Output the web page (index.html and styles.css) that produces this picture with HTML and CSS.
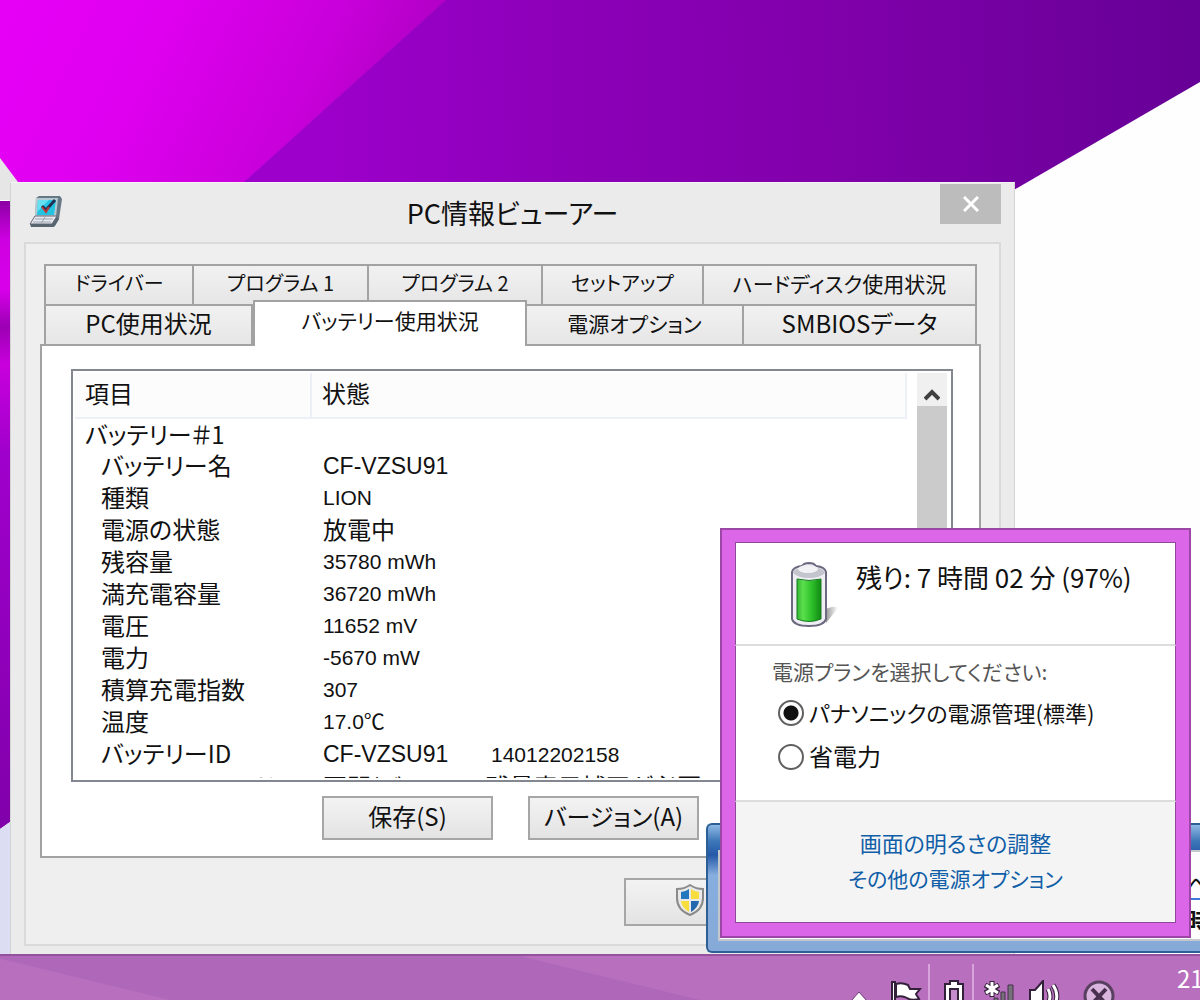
FILE: index.html
```html
<!DOCTYPE html>
<html lang="ja">
<head>
<meta charset="utf-8">
<title>PC情報ビューアー</title>
<link rel="stylesheet" href="styles.css">
</head>
<body>
<svg class="wallpaper" viewBox="0 0 1200 1000" preserveAspectRatio="xMinYMin slice" aria-hidden="true">
  <defs>
    <linearGradient id="magenta" x1="0" y1="0" x2="1" y2="0.2">
      <stop offset="0" stop-color="#e600f6"/><stop offset="0.35" stop-color="#e000f0"/><stop offset="0.75" stop-color="#c800da"/><stop offset="1" stop-color="#ae00c2"/>
    </linearGradient>
    <linearGradient id="purple" gradientUnits="userSpaceOnUse" x1="300" y1="80" x2="1200" y2="60">
      <stop offset="0" stop-color="#9e00cc"/><stop offset="0.3" stop-color="#8c00b8"/><stop offset="0.6" stop-color="#8000aa"/><stop offset="1" stop-color="#660096"/>
    </linearGradient>
    <linearGradient id="edge" x1="0" y1="0" x2="0" y2="1">
      <stop offset="0" stop-color="#8c00a4"/><stop offset="0.06" stop-color="#cc00e0"/><stop offset="0.14" stop-color="#d800ea"/><stop offset="0.2" stop-color="#9c00b4"/><stop offset="0.26" stop-color="#c800dc"/><stop offset="0.4" stop-color="#a000cc"/><stop offset="1" stop-color="#8000aa"/>
    </linearGradient>
  </defs>
  <rect width="1200" height="1000" fill="#fefefe"/>
  <path d="M0 0H447L236 190H20Q6 182 0 162Z" fill="url(#magenta)"/>
  <path d="M446 0H1200V82L1012 191H234Z" fill="url(#purple)"/>
  <path d="M0 158L18 182V200H0Z" fill="#e6e6e6"/>
  <path d="M0 201H10V822L0 829Z" fill="url(#edge)"/>
  <path d="M0 829L10 822V960H0Z" fill="#dcdcf2"/>
</svg>

<main class="window">
  <header class="titlebar">
    <svg class="app-icon" viewBox="0 0 34 34" aria-hidden="true">
      <path d="M7 3L10 1H31L33 4L30 24L26 31H6Z" fill="#657883"/>
      <path d="M7 3H29L27 22H6Z" fill="#b4cad2"/>
      <path d="M9 5H27L25 20H8Z" fill="#22c4e2"/>
      <path d="M9 5H20L8 17Z" fill="#66e0f0"/>
      <path d="M6 21H28L23 29H1Z" fill="#e8eaf0" stroke="#667" />
      <path d="M1 29H23L28 22L30 24L25 32H2Z" fill="#576670"/>
      <path d="M6 24H24M4 27H22M16 22L12 29" stroke="#9aa3b0" fill="none"/>
      <path d="M13 11L17 15L26 5" fill="none" stroke="#243052" stroke-width="3"/>
      <path d="M13 12L17 17L20 12" fill="none" stroke="#b83c3c" stroke-width="2"/>
    </svg>
    <h1 class="title">PC情報ビューアー</h1>
    <button class="close" type="button" aria-label="閉じる">
      <svg viewBox="0 0 16 16" width="16" height="16"><path d="M1 1L15 15M15 1L1 15" stroke="#fff" stroke-width="3" fill="none"/></svg>
    </button>
  </header>
  <div class="client">
    <div class="tabs" role="tablist">
      <div class="tab-row tab-row-back">
        <button class="tab kana" role="tab" type="button">ドライバー</button>
        <button class="tab kana" role="tab" type="button">プログラム 1</button>
        <button class="tab kana" role="tab" type="button">プログラム 2</button>
        <button class="tab kana" role="tab" type="button">セットアップ</button>
        <button class="tab mixed" role="tab" type="button">ハードディスク使用状況</button>
      </div>
      <div class="tab-row tab-row-front">
        <button class="tab" role="tab" type="button">PC使用状況</button>
        <button class="tab mixed selected" role="tab" type="button" aria-selected="true">バッテリー使用状況</button>
        <button class="tab mixed" role="tab" type="button">電源オプション</button>
        <button class="tab" role="tab" type="button">SMBIOSデータ</button>
      </div>
    </div>
    <section class="panel" role="tabpanel">
      <div class="list">
        <div class="list-view">
          <table class="table">
            <colgroup><col class="col-item"><col class="col-state"></colgroup>
            <thead><tr><th>項目</th><th>状態</th></tr></thead>
            <tbody>
              <tr><td class="group">バッテリー＃1</td><td></td></tr>
              <tr><td>バッテリー名</td><td class="num code">CF-VZSU91</td></tr>
              <tr><td>種類</td><td class="num">LION</td></tr>
              <tr><td>電源の状態</td><td>放電中</td></tr>
              <tr><td>残容量</td><td class="num">35780 mWh</td></tr>
              <tr><td>満充電容量</td><td class="num">36720 mWh</td></tr>
              <tr><td>電圧</td><td class="num">11652 mV</td></tr>
              <tr><td>電力</td><td class="num">-5670 mW</td></tr>
              <tr><td>積算充電指数</td><td class="num">307</td></tr>
              <tr><td>温度</td><td class="num">17.0℃</td></tr>
              <tr><td>バッテリーID</td><td class="num"><span class="model code">CF-VZSU91</span>14012202158</td></tr>
              <tr><td>エコノミーモード</td><td>再開(バッテリー残量表示補正が必要です)</td></tr>
            </tbody>
          </table>
        </div>
        <div class="scrollbar">
          <button class="scroll-up" type="button" aria-label="上へスクロール">
            <svg viewBox="0 0 16 12" width="16" height="12"><path d="M1 10L8 3L15 10" fill="none" stroke="#404040" stroke-width="4"/></svg>
          </button>
          <div class="thumb"></div>
        </div>
      </div>
      <div class="actions">
        <button class="button" type="button">保存(S)</button>
        <button class="button" type="button">バージョン(A)</button>
      </div>
    </section>
    <div class="footer">
      <button class="button shield-button" type="button" aria-label="管理者として実行">
        <svg viewBox="0 0 28 32" width="28" height="32">
          <path d="M14 1Q20 5 27 5V14Q27 26 14 31Q1 26 1 14V5Q8 5 14 1Z" fill="#e9e9e9" stroke="#8a8a8a" stroke-width="2"/>
          <path d="M13 5V15H5V8Q9 8 13 5Z" fill="#2377bd"/><path d="M15 5Q19 8 23 8V15H15Z" fill="#f7de3c"/>
          <path d="M5 17H13V28Q6 24 5 17Z" fill="#f7de3c"/><path d="M15 17H23Q22 24 15 28Z" fill="#2367ae"/>
        </svg>
      </button>
    </div>
  </div>
</main>

<aside class="gadget">
  <div class="gadget-body">
    <p class="gadget-line gadget-link">へ</p>
    <p class="gadget-line gadget-time">時</p>
  </div>
</aside>

<footer class="taskbar">
  <svg class="glass" viewBox="0 0 1200 46" preserveAspectRatio="none" aria-hidden="true"><path d="M0 3L170 46H700L520 0H0Z" fill="#a862b6" opacity="0.6"/></svg>
  <div class="tray">
    <svg class="caret" viewBox="0 0 18 12" width="18" height="12"><path d="M1 11L9 2L17 11Z" fill="#fff" stroke="#6d3a78"/></svg>
    <svg class="flag" viewBox="0 0 32 26" width="32" height="26"><path d="M2 26V2H5V26Z" fill="#fff" stroke="#33203a" stroke-width="2"/><path d="M6 4Q12 2 18 5L20 9H30L26 14L29 19Q22 21 17 18Q12 15 6 17Z" fill="#fff" stroke="#33203a" stroke-width="2"/></svg>
    <span class="highlight"><svg viewBox="0 0 22 26" width="22" height="26"><path d="M7 1H15V4H20V26H2V4H7Z" fill="#fff" stroke="#33203a" stroke-width="2"/><path d="M7 9H15V26H7Z" fill="#c58bcc" stroke="#33203a" stroke-width="2"/></svg></span>
    <svg class="signal" viewBox="0 0 32 26" width="32" height="26"><path d="M9 1V17M2 5L16 13M16 5L2 13" stroke="#33203a" stroke-width="5"/><path d="M9 2V16M3 5L15 13M15 5L3 13" stroke="#fff" stroke-width="3"/><path d="M11 26V18H15V26M18 26V12H22V26M25 26V5H30V26" fill="#77717a" stroke="#44304a"/></svg>
    <svg class="volume" viewBox="0 0 32 26" width="32" height="26"><path d="M1 10H6L14 1V26H1Z" fill="#fff" stroke="#33203a" stroke-width="2"/><path d="M19 9Q23 16 19 24M24 5Q31 15 25 26" fill="none" stroke="#33203a" stroke-width="5"/><path d="M19 9Q23 16 19 24M24 5Q31 15 25 26" fill="none" stroke="#fff" stroke-width="3"/></svg>
    <svg class="offline" viewBox="0 0 32 26" width="32" height="26"><circle cx="16" cy="16" r="14" fill="#d9b4de" stroke="#5a4060" stroke-width="3"/><path d="M9 9L23 24M23 9L9 24" stroke="#4a3050" stroke-width="4"/></svg>
    <time class="clock">21:05</time>
  </div>
</footer>

<section class="popup" aria-label="電源">
  <div class="popup-status">
    <svg class="battery" viewBox="0 0 50 66" width="50" height="66" aria-hidden="true">
      <defs>
        <linearGradient id="cell" x1="0" x2="1"><stop offset="0" stop-color="#36b436"/><stop offset="0.25" stop-color="#5be04c"/><stop offset="0.6" stop-color="#2fc22b"/><stop offset="1" stop-color="#128a14"/></linearGradient>
        <linearGradient id="cast" x1="0" x2="1"><stop offset="0" stop-color="#999"/><stop offset="1" stop-color="#fff"/></linearGradient>
      </defs>
      <path d="M36 61L48 46Q45 43 36 47Z" fill="url(#cast)"/>
      <path d="M2 10Q3 5 12 4Q14 1 19 1Q24 1 26 4Q35 5 36 10V57Q34 64 19 64Q4 64 2 57Z" fill="#eeeef4" stroke="#6c6a80" stroke-width="2"/>
      <path d="M3 11Q5 6 12 6Q14 2 19 2Q24 2 26 6Q33 6 35 11Q30 16 19 16Q8 16 3 11Z" fill="#c4c4ce"/>
      <ellipse cx="18" cy="7" rx="10" ry="4" fill="#f2f2f6"/>
      <path d="M7 17Q19 20 31 17V57Q19 62 7 57Z" fill="url(#cell)" stroke="#177a20"/>
    </svg>
    <p class="remaining">残り: 7 時間 02 分 (97%)</p>
  </div>
  <fieldset class="plans">
    <legend class="plans-title">電源プランを選択してください:</legend>
    <label class="plan"><input class="radio" type="radio" name="plan" checked><span class="mixed-label">パナソニックの電源管理(標準)</span></label>
    <label class="plan"><input class="radio" type="radio" name="plan"><span>省電力</span></label>
  </fieldset>
  <nav class="links">
    <a class="link" href="#brightness">画面の明るさの調整</a>
    <a class="link kana-link" href="#options">その他の電源オプション</a>
  </nav>
</section>
</body>
</html>
```
FILE: styles.css
```css
* { box-sizing: border-box; }
body {
  margin: 0;
  height: 100vh;
  position: relative;
  overflow: hidden;
  background: #fefefe;
  color: #111;
  font-family: "Noto Sans CJK JP", sans-serif;
  font-size: 24px;
  font-feature-settings: "palt";
}
button { font: inherit; font-feature-settings: inherit; color: inherit; padding: 0; margin: 0; }
p, h1 { margin: 0; }

.wallpaper { position: absolute; inset: 0; width: 100%; height: 100%; }

.window {
  position: absolute;
  left: 10px;
  top: 182px;
  width: 1005px;
  display: flex;
  flex-direction: column;
  padding: 0 13px 9px;
  background: #ebebeb;
  border: 1px solid #d4d4d4;
  border-top-color: #f4f4f4;
}
.titlebar { display: grid; grid-template-columns: 61px 1fr 61px; height: 59px; align-items: start; }
.app-icon { width: 34px; height: 34px; margin: 12px 0 0 5px; }
.title { font-size: 27px; font-weight: 400; line-height: 40px; padding-top: 10px; text-align: center; }
.close { height: 40px; margin-top: 1px; border: 0; background: #bcbcbc; display: grid; place-items: center; }
.client { border: 2px solid #dadada; background: #efefef; padding: 20px 18px 18px 14px; }

.tabs { padding: 0 4px; }
.tab-row { display: grid; height: 40px; }
.tab-row-back { grid-template-columns: 150fr 175fr 174fr 161fr 273fr; }
.tab-row-front { grid-template-columns: 209fr 274fr 217fr 233fr; }
.tab {
  border: 2px solid #a2a2a2;
  border-width: 2px 2px 0 0;
  background: linear-gradient(#f1f1f1, #e6e6e6);
  font-size: 24px;
  line-height: 32px;
  padding-bottom: 4px;
  white-space: nowrap;
}
.kana { font-size: 20px; }
.mixed { font-size: 21px; }
.tab:first-child { border-left-width: 2px; }
.selected {
  position: relative;
  margin: -4px 0 -2px;
  padding-bottom: 8px;
  background: #fff;
  border-left-width: 2px;
  z-index: 1;
}
.panel { border: 2px solid #a2a2a2; background: #fff; padding: 23px 26px 16px 29px; }
.list { display: flex; height: 413px; border: 2px solid #828790; padding: 2px 4px 2px 2px; overflow: hidden; }
.list-view { flex: 1; overflow: hidden; }
.table { width: 100%; table-layout: fixed; border-collapse: collapse; }
.col-item { width: 236px; }
th { height: 45px; padding: 0 0 4px 10px; font-weight: 400; text-align: left; line-height: 36px; background: #fcfcfd; border-bottom: 2px solid #edf0f6; border-right: 2px solid #edf0f6; }
td { height: 32px; padding: 0 0 0 26px; line-height: 30px; vertical-align: top; white-space: nowrap; }
td + td { padding-left: 12px; }
td.group { padding-left: 10px; }
td.num { font-family: "Liberation Sans", "Noto Sans CJK JP", sans-serif; font-size: 21px; line-height: 32px; }
td.code, .code { font-size: 23px; }
.model { display: inline-block; width: 168px; }
.scrollbar { width: 40px; padding-left: 10px; display: flex; flex-direction: column; }
.scroll-up { height: 33px; border: 0; background: #f0f0f0; }
.thumb { flex: 1; background: #cbcbcb; }
.actions { display: flex; gap: 35px; padding: 14px 0 0 251px; }
.button { width: 171px; height: 44px; border: 2px solid #a6a6a6; background: linear-gradient(#f3f3f3, #e3e3e3); line-height: 32px; padding-bottom: 5px; }
.footer { display: flex; padding: 20px 0 0 584px; }
.shield-button { height: 48px; width: 180px; text-align: left; padding: 0 0 4px 50px; }
.shield-button svg { display: block; }

.gadget {
  position: absolute;
  left: 706px;
  right: 0;
  top: 823px;
  height: 130px;
  border: 2px solid #2b5f96;
  border-right: 0;
  border-radius: 6px 0 0 6px;
  background: linear-gradient(#8fb8e4, #3e78b8 16px, #2458a8 30px, #86aede 50px, #86aad8);
  padding: 25px 0 10px 10px;
  overflow: hidden;
}
.gadget-body { height: 100%; background: #fdfdfd; border: 2px solid #c4c8cc; border-right: 0; padding: 18px 0 0 466px; overflow: hidden; }
.gadget-line { line-height: 28px; }
.gadget-link { border-bottom: 2px solid #3f78dc; }
.gadget-time { font-weight: 700; line-height: 40px; }

.taskbar { position: absolute; left: 0; right: 0; top: 954px; bottom: 0; overflow: hidden; background: #b870be; border-top: 2px solid #94529e; }
.glass { position: absolute; inset: 0; width: 100%; height: 100%; }
.tray { position: absolute; right: 0; top: 0; display: flex; align-items: flex-start; width: 352px; height: 46px; padding-top: 24px; }
.tray svg { flex: none; }
.caret { margin: 10px 22px 0 2px; }
.flag { margin-right: 6px; }
.highlight { flex: none; display: flex; justify-content: center; width: 46px; height: 46px; margin: -16px 9px 0 0; padding: 16px 0 0 6px; border: 1px solid #d7a5db; border-width: 0 2px; }
.signal { margin-right: 14px; }
.volume { margin-right: 22px; }
.offline { margin-right: 62px; }
.clock { color: #fff; line-height: 36px; margin-top: -20px; }

.popup {
  position: absolute;
  left: 720px;
  top: 528px;
  width: 471px;
  border: 2px solid #9c46a6;
  padding: 12px 13px 13px;
  background: #dc66e8;
}
.popup-status { display: flex; gap: 16px; height: 104px; padding: 19px 0 0 54px; background: #fff; border: 1px solid #8f4799; border-bottom: 2px solid #dcdcdc; }
.remaining { font-size: 26px; line-height: 30px; }
.plans { margin: 0; height: 156px; border: 1px solid #8f4799; border-width: 0 1px; border-bottom: 2px solid #dcdcdc; background: #fff; padding: 8px 0 0 36px; display: flow-root; }
.plans-title { float: left; width: 100%; padding: 0; color: #555; font-size: 21px; line-height: 34px; margin-bottom: 3px; }
.plan { display: flex; align-items: center; gap: 5px; height: 44px; clear: both; padding-left: 6px; line-height: 32px; }
.plan span { padding-bottom: 3px; }
.mixed-label { font-size: 22px; }
.radio { appearance: none; width: 26px; height: 26px; margin: 0; border: 2px solid #606060; border-radius: 50%; background: #fff; }
.radio:checked { background: radial-gradient(circle, #111 0 7px, #fff 8px); }
.links { display: flex; flex-direction: column; align-items: center; height: 121px; padding-top: 22px; background: #f4f4f4; border: 1px solid #8f4799; border-top: 0; }
.link { color: #0f5ea8; text-decoration: none; font-size: 22px; line-height: 36px; }
.kana-link { font-size: 21px; }
```
